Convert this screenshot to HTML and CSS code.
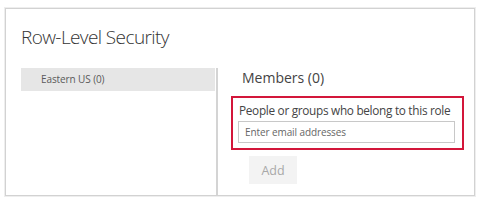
FILE: index.html
```html
<!DOCTYPE html>
<html>
<head>
<meta charset="utf-8">
<link rel="stylesheet" href="styles.css">
</head>
<body>
<div class="panel">
  <h1 class="title">Row-Level Security</h1>
  <div class="content">
    <div class="roles">
      <div class="role">Eastern US (0)</div>
    </div>
    <div class="members">
      <h2 class="members-title">Members (0)</h2>
      <div class="field">
        <label class="field-label">People or groups who belong to this role</label>
        <input class="field-input" type="text" placeholder="Enter email addresses">
      </div>
      <button class="add-btn">Add</button>
    </div>
  </div>
</div>
</body>
</html>
```
FILE: styles.css
```css
* { box-sizing: border-box; }
html, body { margin: 0; padding: 0; background: #fff; }
body { font-family: "Open Sans", "Liberation Sans", sans-serif; color: #333; }

.panel {
  margin: 8px 7px 4px 5px;
  height: 188px;
  border: 1px solid #d2d2d2;
  box-shadow: 0 0 0 1px #eeeeee;
  padding: 0 0 0 15px;
  display: flex;
  flex-direction: column;
}

.title {
  margin: 14px 0 0 0;
  font-size: 19px;
  font-weight: 300;
  letter-spacing: -0.6px;
  line-height: 28px;
  color: #333;
}

.content {
  flex: 1;
  display: flex;
  margin-top: 17px;
}

.roles { width: 195px; }

.role {
  width: 194px;
  height: 23px;
  background: #e6e6e6;
  padding-left: 20px;
  font-size: 10px;
  letter-spacing: -0.1px;
  line-height: 23px;
  color: #5a5a5a;
}

.members {
  flex: 1;
  border-left: 2px solid #d4d4d4;
  padding-left: 13px;
}

.members-title {
  margin: 0 0 0 11px;
  font-size: 14px;
  font-weight: 400;
  line-height: 20px;
  color: #444;
}

.field {
  width: 233px;
  margin-top: 8px;
  border: 2px solid #d3163a;
  padding: 4px 7px 5px 5px;
}

.field-label {
  display: block;
  padding-left: 1px;
  font-size: 11.8px;
  letter-spacing: -0.3px;
  line-height: 16px;
  color: #444;
  white-space: nowrap;
}

.field-input {
  display: block;
  width: 100%;
  height: 22px;
  margin-top: 3px;
  border: 1px solid #c8c8c8;
  padding: 0 6px;
  font-family: "Open Sans", "Liberation Sans", sans-serif;
  font-size: 10px;
  letter-spacing: -0.1px;
  color: #333;
  outline: none;
}
.field-input::placeholder { color: #666; }

.add-btn {
  display: block;
  margin: 6px 0 0 18px;
  width: 48px;
  height: 28px;
  border: none;
  background: #f3f3f3;
  font-family: "Open Sans", "Liberation Sans", sans-serif;
  font-size: 12.5px;
  color: #a8a8a8;
}
```
